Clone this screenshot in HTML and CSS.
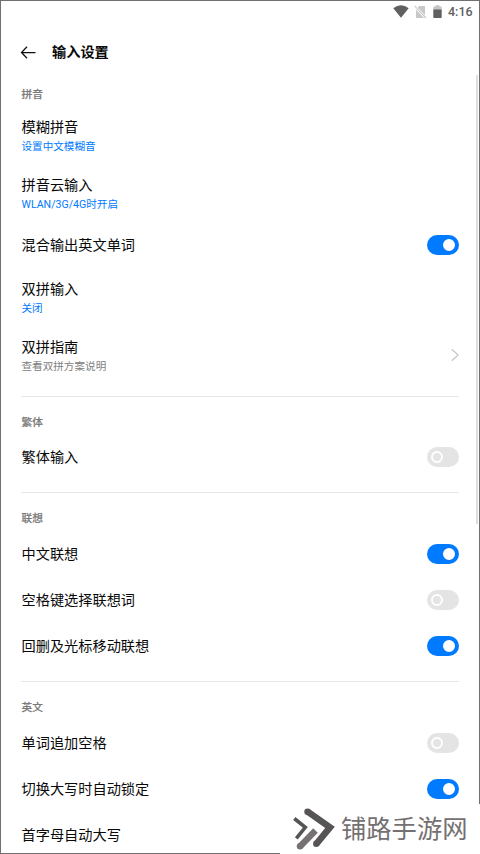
FILE: index.html
```html
<!DOCTYPE html>
<html lang="zh-CN">
<head>
<meta charset="utf-8">
<title>输入设置</title>
<link rel="stylesheet" href="styles.css">
</head>
<body>
<div class="screen">
  <div class="status">
    <svg class="wifi" width="16" height="13" viewBox="0 0 16 13"><path d="M.3 3.2Q8-2.6 15.7 3.2L8 12.7Z" fill="#606060"/></svg>
    <svg class="sim" width="13" height="14" viewBox="0 0 13 14"><path d="M5.2 1H11V10.2L3.7 2.5ZM2 4.4 10 13H2Z" fill="#c8c8c8"/><path d="M.8 1.2 12 13" stroke="#c8c8c8" stroke-width="1.1"/></svg>
    <svg class="battery" width="9" height="14" viewBox="0 0 9 14"><path d="M.3 5V2.2Q.3 1.5 1 1.5H2.5V.3H6.5V1.5H8Q8.7 1.5 8.7 2.2V5Z" fill="#c4c4c4"/><path d="M.3 4.6H8.7V12.3Q8.7 13 8 13H1Q.3 13 .3 12.3Z" fill="#606060"/></svg>
    <span class="time">4:16</span>
  </div>
  <header class="header">
    <svg width="16" height="14" viewBox="0 0 16 14" fill="none" stroke="#111" stroke-width="1.25"><path d="M1.5 7.5H15.5M7 1.8 1.5 7.5 7 13.2"/></svg>
    <h1>输入设置</h1>
  </header>
  <main>
    <section>
      <h2 class="first">拼音</h2>
      <div class="row double"><div><p>模糊拼音</p><small>设置中文模糊音</small></div></div>
      <div class="row double"><div><p>拼音云输入</p><small>WLAN/3G/4G时开启</small></div></div>
      <div class="row"><p>混合输出英文单词</p><i class="switch on"></i></div>
      <div class="row double"><div><p>双拼输入</p><small>关闭</small></div></div>
      <div class="row double"><div><p>双拼指南</p><small class="muted">查看双拼方案说明</small></div>
        <svg class="chevron" width="9" height="14" viewBox="0 0 9 14" fill="none" stroke="#c4c4c4" stroke-width="1.2"><path d="M1.8 1.2 8.2 7 1.8 12.8"/></svg></div>
    </section>
    <section>
      <h2>繁体</h2>
      <div class="row"><p>繁体输入</p><i class="switch"></i></div>
    </section>
    <section>
      <h2>联想</h2>
      <div class="row"><p>中文联想</p><i class="switch on"></i></div>
      <div class="row"><p>空格键选择联想词</p><i class="switch"></i></div>
      <div class="row"><p>回删及光标移动联想</p><i class="switch on"></i></div>
    </section>
    <section>
      <h2>英文</h2>
      <div class="row"><p>单词追加空格</p><i class="switch"></i></div>
      <div class="row"><p>切换大写时自动锁定</p><i class="switch on"></i></div>
      <div class="row"><p>首字母自动大写</p></div>
    </section>
  </main>
  <div class="scrollbar"></div>
</div>
<div class="brand">
  <svg width="45" height="44" viewBox="0 0 45 44" fill="none">
    <path d="M2.3 11.5 13.3 20.3 4.3 31.3" stroke="#575455" stroke-width="3.6"/>
    <path d="M8 39.5 23.5 23.5" stroke="#787173" stroke-width="6.4"/>
    <circle cx="8" cy="39.3" r="3.2" fill="#787173"/>
    <path d="M15.6 4.6 38 20.3 24.3 37" stroke="#575455" stroke-width="6.6"/>
    <circle cx="15.6" cy="4.8" r="3.3" fill="#575455"/>
    <circle cx="24.3" cy="36.8" r="3.2" fill="#575455"/>
  </svg>
  <span>铺路手游网</span>
</div>
</body>
</html>
```
FILE: styles.css
```css
*, *::before { box-sizing: border-box; margin: 0; padding: 0; }
body {
  width: 480px;
  height: 854px;
  overflow: hidden;
  position: relative;
  background: #fff;
  color: #090909;
  font-family: Roboto, "Noto Sans CJK SC", sans-serif;
}
.screen {
  height: 854px;
  border: 1px solid #736e70;
  overflow: hidden;
}
.status {
  height: 21px;
  display: flex;
  align-items: center;
  justify-content: flex-end;
  padding-right: 6px;
}
.wifi { margin-right: 5px; }
.sim { margin-right: 6px; }
.battery { margin-right: 6px; }
.time {
  width: 25px;
  font-size: 12.5px;
  font-weight: 500;
  line-height: 20px;
  color: #606060;
  white-space: nowrap;
}
.header {
  height: 60px;
  display: flex;
  align-items: center;
  gap: 16px;
  padding-left: 19px;
}
h1 { font-size: 14.2px; line-height: 20px; font-weight: 700; }
main { padding: 0 20px; }
section { padding-bottom: 12px; border-bottom: 1px solid #e6e6e6; }
section:last-child { border: 0; }
h2 {
  height: 37.2px;
  padding: 17.7px 0 0 .5px;
  font-size: 10.7px;
  line-height: 16px;
  font-weight: 500;
  color: #7b7b7b;
  -webkit-text-stroke: .2px #7b7b7b;
}
h2.first { height: 24px; padding-top: 5px; }
.row {
  height: 46.3px;
  display: flex;
  align-items: center;
  justify-content: space-between;
}
.row.double { height: 57.9px; padding-top: 3px; }
p { padding-left: .5px; font-size: 14.2px; line-height: 20px; }
small {
  display: block;
  padding-left: .5px;
  font-size: 10.6px;
  line-height: 19px;
  color: #007aff;
}
small.muted { color: #808080; }
.chevron { margin-bottom: 3px; }
.switch {
  width: 32px;
  height: 20px;
  padding: 4px;
  border-radius: 10px;
  background: #e4e4e4;
}
.switch::before {
  content: "";
  display: block;
  width: 12px;
  height: 12px;
  border: 2px solid #fff;
  border-radius: 50%;
}
.switch.on { background: #007aff; }
.switch.on::before { margin-left: 12px; background: #fff; }
.scrollbar {
  position: absolute;
  top: 75px;
  right: 2px;
  width: 2px;
  height: 449px;
  background: #dedede;
}
.brand {
  position: absolute;
  left: 280px;
  top: 804px;
  width: 200px;
  height: 50px;
  display: flex;
  align-items: center;
  padding-left: 12px;
  background: #fff;
  color: #757071;
  font-size: 25.3px;
  line-height: 36px;
  white-space: nowrap;
}
.brand span { margin: 2px 0 0 4px; }
```
